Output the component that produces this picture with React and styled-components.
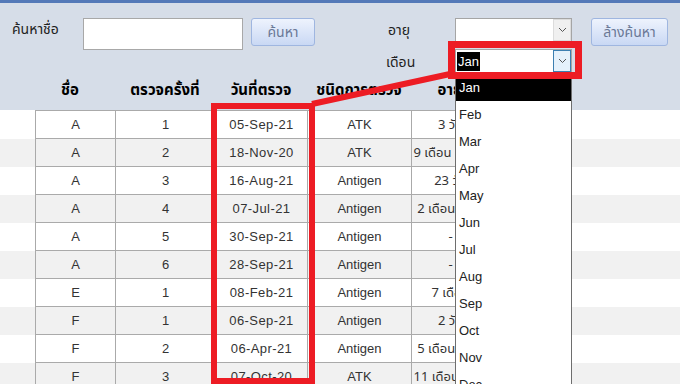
import React from "react";
import styled, { createGlobalStyle } from "styled-components";

const Global = createGlobalStyle`
  html, body { margin: 0; padding: 0; background: #ffffff; }
  body { font-family: Tahoma, "Noto Sans Thai", "Liberation Sans", sans-serif; width: 680px; height: 384px; overflow: hidden; }
  * { box-sizing: border-box; }
`;

const Page = styled.div`
  position: relative;
  width: 680px;
  height: 384px;
  overflow: hidden;
`;

const TopBar = styled.div`
  height: 110px;
  background: #d6dde8;
  border-top: 3px solid #5479b8;
  padding: 15px 0 0 12px;
  display: flex;
  flex-direction: column;
`;

const FilterRow = styled.div`
  display: flex;
  align-items: flex-start;
`;

const Label = styled.div`
  width: ${(p) => p.$w}px;
  height: 24px;
  line-height: 24px;
  font-size: 14px;
  color: #222;
  white-space: nowrap;
`;

const TextInput = styled.div`
  width: 160px;
  height: 32px;
  background: #fff;
  border: 1px solid #a8a8a8;
`;

const Button = styled.div`
  width: ${(p) => p.$w}px;
  height: 28px;
  margin-left: ${(p) => p.$ml}px;
  border: 1px solid #9fb6e0;
  border-radius: 3px;
  background: linear-gradient(#eef3fd, #c9d8f4);
  color: #6a7896;
  font-size: 14px;
  display: flex;
  align-items: center;
  justify-content: center;
  white-space: nowrap;
`;

const FilterGrid = styled.div`
  margin-left: 71px;
  display: grid;
  grid-template-columns: 69px 117px;
  grid-template-rows: 24px 24px;
  row-gap: 7px;
  align-items: center;
`;

const GridLabel = styled.div`
  font-size: 14px;
  color: #222;
  padding-left: ${(p) => p.$pl}px;
  margin-top: ${(p) => p.$mt || 0}px;
`;

const Select = styled.div`
  height: 24px;
  background: #fff;
  border: 1px solid #a5a5a5;
  display: flex;
  align-items: stretch;
  font-family: "Liberation Sans", Arial, sans-serif;
  font-size: 13px;
`;

const SelectValue = styled.div`
  flex: 1;
  display: flex;
  align-items: center;
  padding-left: 1px;
`;

const Highlight = styled.span`
  background: #000;
  color: #fff;
  line-height: 19px;
  padding: 0 1px;
`;

const Arrow = styled.div`
  width: 18px;
  display: flex;
  align-items: center;
  justify-content: center;
  background: ${(p) => (p.$active ? "#e5f1fb" : "#f0f0f0")};
  border: 1px solid ${(p) => (p.$active ? "#3c7fb1" : "#dcdcdc")};
  margin: ${(p) => (p.$active ? "0" : "0")};
`;

const HeaderRow = styled.div`
  margin-top: 5px;
  margin-left: 23px;
  display: grid;
  grid-template-columns: 80px 100px 92px 104px 78px;
  height: 24px;
  align-items: center;
`;

const HeaderCell = styled.div`
  text-align: center;
  font-weight: bold;
  font-size: 15px;
  color: #000;
  white-space: nowrap;
  padding-right: ${(p) => p.$pr || 0}px;
`;

const Row = styled.div`
  height: ${(p) => (p.$first ? 29 : 28)}px;
  background: ${(p) => (p.$alt ? "#f1f1f1" : "#ffffff")};
  padding-left: 35px;
  display: flex;
`;

const Cells = styled.div`
  display: grid;
  grid-template-columns: 81px 100px 92px 104px 78px;
`;

const Cell = styled.div`
  border-right: 1px solid #aaaaaa;
  border-bottom: 1px solid #aaaaaa;
  border-top: ${(p) => (p.$first ? "1px solid #aaaaaa" : "none")};
  border-left: ${(p) => (p.$left ? "1px solid #aaaaaa" : "none")};
  display: flex;
  align-items: center;
  justify-content: center;
  font-family: "Liberation Sans", Arial, Tahoma, sans-serif;
  font-size: 13px;
  color: #333;
  white-space: nowrap;
  overflow: visible;
  letter-spacing: ${(p) => (p.$date ? "0.4px" : "0")};
`;

const AgeText = styled.span`
  font-family: Tahoma, "Noto Sans Thai", "Liberation Sans", sans-serif;
`;

const Dropdown = styled.div`
  position: absolute;
  left: 455px;
  top: 73px;
  width: 117px;
  height: 330px;
  background: #fff;
  border: 1px solid #6e6e6e;
  font-family: "Liberation Sans", Arial, sans-serif;
  font-size: 13px;
`;

const Option = styled.div`
  height: 27px;
  line-height: 27px;
  padding-left: 3px;
  color: ${(p) => (p.$sel ? "#fff" : "#222")};
  background: ${(p) => (p.$sel ? "#000" : "transparent")};
`;

const Overlay = styled.svg`
  position: absolute;
  left: 0;
  top: 0;
  pointer-events: none;
`;

const Chevron = () => (
  <svg width="9" height="6" viewBox="0 0 9 6">
    <path d="M1 1 L4.5 4.5 L8 1" fill="none" stroke="#555" strokeWidth="1" />
  </svg>
);

const rows = [
  ["A", "1", "05-Sep-21", "ATK", "3 วัน"],
  ["A", "2", "18-Nov-20", "ATK", "9 เดือน 18 วัน"],
  ["A", "3", "16-Aug-21", "Antigen", "23 วัน"],
  ["A", "4", "07-Jul-21", "Antigen", "2 เดือน 5 วัน"],
  ["A", "5", "30-Sep-21", "Antigen", "-"],
  ["A", "6", "28-Sep-21", "Antigen", "-"],
  ["E", "1", "08-Feb-21", "Antigen", "7 เดือน"],
  ["F", "1", "06-Sep-21", "Antigen", "2 วัน"],
  ["F", "2", "06-Apr-21", "Antigen", "5 เดือน 9 วัน"],
  ["F", "3", "07-Oct-20", "ATK", "11 เดือน 3 วัน"],
];

const months = ["Jan", "Feb", "Mar", "Apr", "May", "Jun", "Jul", "Aug", "Sep", "Oct", "Nov", "Dec"];

export default function App() {
  return (
    <>
      <Global />
      <Page>
        <TopBar>
          <FilterRow>
            <Label $w={71}>ค้นหาชื่อ</Label>
            <TextInput />
            <Button $w={64} $ml={8}>ค้นหา</Button>
            <FilterGrid>
              <GridLabel $pl={2}>อายุ</GridLabel>
              <Select>
                <SelectValue />
                <Arrow>
                  <Chevron />
                </Arrow>
              </Select>
              <GridLabel $pl={0} $mt={2}>เดือน</GridLabel>
              <Select>
                <SelectValue>
                  <Highlight>Jan</Highlight>
                </SelectValue>
                <Arrow $active>
                  <Chevron />
                </Arrow>
              </Select>
            </FilterGrid>
            <Button $w={77} $ml={19}>ล้างค้นหา</Button>
          </FilterRow>
          <HeaderRow>
            <HeaderCell $pr={10}>ชื่อ</HeaderCell>
            <HeaderCell>ตรวจครั้งที่</HeaderCell>
            <HeaderCell>วันที่ตรวจ</HeaderCell>
            <HeaderCell>ชนิดการตรวจ</HeaderCell>
            <HeaderCell>อายุ</HeaderCell>
          </HeaderRow>
        </TopBar>
        {rows.map((r, i) => (
          <Row key={i} $alt={i % 2 === 1} $first={i === 0}>
            <Cells>
              <Cell $left $first={i === 0}>{r[0]}</Cell>
              <Cell $first={i === 0}>{r[1]}</Cell>
              <Cell $first={i === 0} $date>{r[2]}</Cell>
              <Cell $first={i === 0}>{r[3]}</Cell>
              <Cell $first={i === 0}>
                <AgeText>{r[4]}</AgeText>
              </Cell>
            </Cells>
          </Row>
        ))}
        <Dropdown>
          {months.map((m, i) => (
            <Option key={m} $sel={i === 0}>
              {m}
            </Option>
          ))}
        </Dropdown>
        <Overlay width="680" height="384" viewBox="0 0 680 384">
          <rect x="214" y="106" width="98" height="275" fill="none" stroke="#ed1c24" strokeWidth="6" />
          <rect x="451.5" y="44.5" width="127" height="31" fill="none" stroke="#ed1c24" strokeWidth="7" />
          <line x1="312" y1="104" x2="450" y2="74" stroke="#ed1c24" strokeWidth="6" />
        </Overlay>
      </Page>
    </>
  );
}
